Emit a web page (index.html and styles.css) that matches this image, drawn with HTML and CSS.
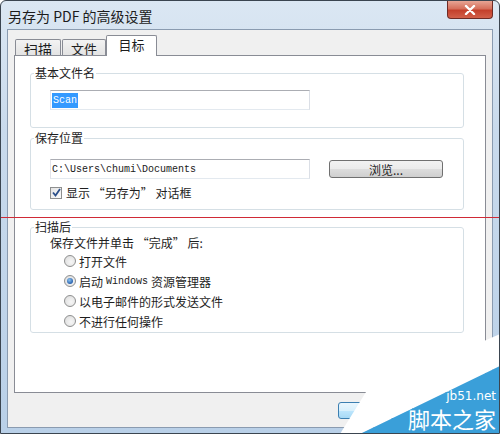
FILE: index.html
```html
<!DOCTYPE html>
<html lang="zh-CN">
<head>
    <meta charset="UTF-8">
    <meta name="viewport" content="width=device-width, initial-scale=1.0">
    <title>另存为 PDF 的高级设置</title>
    <link rel="stylesheet" href="styles.css">
</head>
<body>
    <div class="window">
        <div class="titlebar">
            <span class="title">另存为 PDF 的高级设置</span>
            <div class="close">
                <svg width="14" height="10" viewBox="0 0 14 10">
                    <path d="M3 1 L11 9 M11 1 L3 9" stroke="#fff" stroke-width="2.4" stroke-linecap="round"/>
                </svg>
            </div>
        </div>

        <div class="client">
            <div class="tabs">
                <div class="tab tab-scan">扫描</div>
                <div class="tab tab-file">文件</div>
                <div class="tab active">目标</div>
            </div>

            <div class="panel">
                <!-- 基本文件名 -->
                <fieldset class="group">
                    <legend>基本文件名</legend>
                    <div class="group-body name-body">
                        <div class="textbox"><span class="selected mono">Scan</span></div>
                    </div>
                </fieldset>

                <!-- 保存位置 -->
                <fieldset class="group group-location">
                    <legend>保存位置</legend>
                    <div class="group-body location-body">
                        <div class="row">
                            <div class="textbox"><span class="mono">C:\Users\chumi\Documents</span></div>
                            <div class="btn browse">浏览...</div>
                        </div>
                        <div class="check-row">
                            <span class="check">
                                <svg width="9" height="9" viewBox="0 0 9 9">
                                    <path d="M1 4.5 L3.5 7.5 L8 1" fill="none" stroke="#2b4f8a" stroke-width="1.8"/>
                                </svg>
                            </span>
                            <span>显示 “另存为” 对话框</span>
                        </div>
                    </div>
                </fieldset>

                <!-- 扫描后 -->
                <fieldset class="group group-after">
                    <legend>扫描后</legend>
                    <div class="group-body after-body">
                        <div class="line">保存文件并单击 “完成” 后:</div>
                        <div class="radio-row"><span class="radio"></span>打开文件</div>
                        <div class="radio-row"><span class="radio on"></span>启动 <span class="mono">Windows</span> 资源管理器</div>
                        <div class="radio-row"><span class="radio"></span>以电子邮件的形式发送文件</div>
                        <div class="radio-row"><span class="radio"></span>不进行任何操作</div>
                    </div>
                </fieldset>
            </div>

            <div class="buttons">
                <div class="btn ok">确定</div>
            </div>
        </div>

        <div class="red-line"></div>

        <svg class="watermark" width="180" height="110" viewBox="320 324 180 110">
            <polygon points="366,392 500,334 500,366 360,434 340,434" fill="#ffffff"/>
            <polygon points="360,434 500,366 500,434" fill="#3a9fd9"/>
            <text x="496" y="400" text-anchor="end" class="wm-url">jb51.net</text>
            <text x="496" y="428" text-anchor="end" class="wm-name">脚本之家</text>
        </svg>
    </div>
</body>
</html>
```

FILE: styles.css
```css
body {
    margin: 0;
    font-family: "Noto Sans CJK SC", "Noto Sans", sans-serif;
    font-size: 12px;
    color: #1e1e1e;
}
.window {
    position: relative;
    width: 500px;
    height: 434px;
    box-sizing: border-box;
    display: flex;
    flex-direction: column;
    overflow: hidden;
    border: 1px solid #3b4550;
    border-radius: 6px 6px 0 0;
    background: linear-gradient(to bottom, #dbe7f3 0%, #c9daec 30%, #b9d0e8 100%);
}
.titlebar {
    height: 28px;
    display: flex;
    justify-content: space-between;
    padding-left: 7px;
}
.title {
    align-self: center;
    font-size: 14px;
    color: #1c1c1c;
    margin-top: 2px;
}
.close {
    width: 44px;
    height: 17px;
    margin-right: 6px;
    display: flex;
    align-items: center;
    justify-content: center;
    border: 1px solid #6f2b25;
    border-top: none;
    border-radius: 0 0 4px 4px;
    background: linear-gradient(to bottom, #e8a595 0%, #d6705c 45%, #c4402c 55%, #d2604a 100%);
}
.client {
    flex: 1;
    margin: 0 6px 5px 6px;
    display: flex;
    flex-direction: column;
    padding: 0 6px;
    background: #f0f0f0;
    border: 1px solid #8a9bb0;
}

/* 选项卡 */
.tabs {
    display: flex;
    align-items: flex-end;
    height: 25px;
    margin-left: 1px;
}
.tab {
    height: 16px;
    box-sizing: border-box;
    display: flex;
    align-items: center;
    justify-content: center;
    font-size: 13px;
    border: 1px solid #898c95;
    border-bottom: none;
    border-radius: 2px 2px 0 0;
    background: linear-gradient(to bottom, #f3f3f3, #e3e3e3);
    padding-top: 2px;
}
.tab-scan {
    width: 46px;
    margin-right: 1px;
    font-size: 14px;
}
.tab-file {
    width: 44px;
}
.tab.active {
    position: relative;
    z-index: 1;
    width: 51px;
    height: 21px;
    margin-bottom: -1px;
    background: #fff;
    padding-top: 0;
    padding-bottom: 3px;
}
.panel {
    height: 338px;
    box-sizing: border-box;
    background: #fff;
    border: 1px solid #898c95;
    padding: 9px 21px 0 15px;
}

/* 分组框 */
.group {
    margin: 0;
    padding: 0 0 0 3px;
    border: 1px solid #d5dfe5;
    border-radius: 3px;
    min-width: 0;
}
.group legend {
    padding: 0 1px;
    line-height: 16px;
    font-size: 12px;
}
.group-body {
    padding-left: 16px;
}
.name-body {
    padding-top: 9px;
    padding-bottom: 17px;
}
.group-location {
    margin-top: 2px;
}
.location-body {
    padding-top: 13px;
    padding-bottom: 10px;
}
.group-after {
    margin-top: 9px;
}
.after-body {
    padding-bottom: 1px;
}
.textbox {
    width: 260px;
    height: 20px;
    box-sizing: border-box;
    display: flex;
    align-items: center;
    padding-left: 1px;
    border: 1px solid;
    border-color: #abadb3 #dbdfe6 #e3e9ef #e2e3ea;
    background: #fff;
}
.mono {
    font-family: "Liberation Mono", monospace;
    font-size: 10px;
    color: #1a1a1a;
}
.selected {
    background: #3399ff;
    color: #fff;
    padding: 2px 1px 2px 1px;
}
.row {
    display: flex;
    align-items: center;
    gap: 19px;
}
.btn {
    height: 18px;
    box-sizing: border-box;
    display: flex;
    align-items: center;
    justify-content: center;
    font-size: 12px;
    border: 1px solid #707070;
    border-radius: 3px;
    background: linear-gradient(to bottom, #f2f2f2 0%, #ebebeb 50%, #dddddd 51%, #cfcfcf 100%);
}
.browse {
    width: 114px;
}
.check-row {
    display: flex;
    align-items: center;
    gap: 4px;
    margin-top: 7px;
    height: 13px;
}
.check {
    width: 12px;
    height: 12px;
    box-sizing: border-box;
    display: flex;
    align-items: center;
    justify-content: center;
    border: 1px solid #8e8f8f;
    background: linear-gradient(to bottom right, #e4e4e4, #fbfbfb);
}
.line {
    height: 16px;
    line-height: 16px;
}
.radio-row {
    height: 20px;
    display: flex;
    align-items: center;
    padding-left: 14px;
    gap: 3px;
}
.radio-row:first-of-type {
    margin-top: 2px;
}
.radio {
    width: 12px;
    height: 12px;
    box-sizing: border-box;
    border-radius: 50%;
    border: 1px solid #8e8f8f;
    background: radial-gradient(circle at 60% 60%, #f6f6f6 0%, #dadada 100%);
    display: flex;
    align-items: center;
    justify-content: center;
}
.radio.on::after {
    content: "";
    width: 6px;
    height: 6px;
    border-radius: 50%;
    background: radial-gradient(circle at 40% 35%, #8cc4f0 0%, #2a62ae 70%);
}
.buttons {
    flex: 1;
    display: flex;
    justify-content: flex-end;
    align-items: center;
    padding-right: 73px;
}
.btn.ok {
    width: 75px;
    height: 17px;
    border-color: #3c7fb1;
    background: linear-gradient(to bottom, #eaf6fd 0%, #d9f0fc 50%, #bee6fd 51%, #a7d9f5 100%);
}

/* 标注线与水印 */
.red-line {
    position: absolute;
    left: 0;
    top: 216px;
    width: 500px;
    height: 1px;
    background: #d02a36;
}
.watermark {
    position: absolute;
    right: -1px;
    bottom: -1px;
}
.wm-url {
    font-family: "DejaVu Sans", sans-serif;
    font-size: 12px;
    fill: #fff;
}
.wm-name {
    font-family: "Noto Sans CJK SC", sans-serif;
    font-size: 22px;
    fill: #fff;
}
```
